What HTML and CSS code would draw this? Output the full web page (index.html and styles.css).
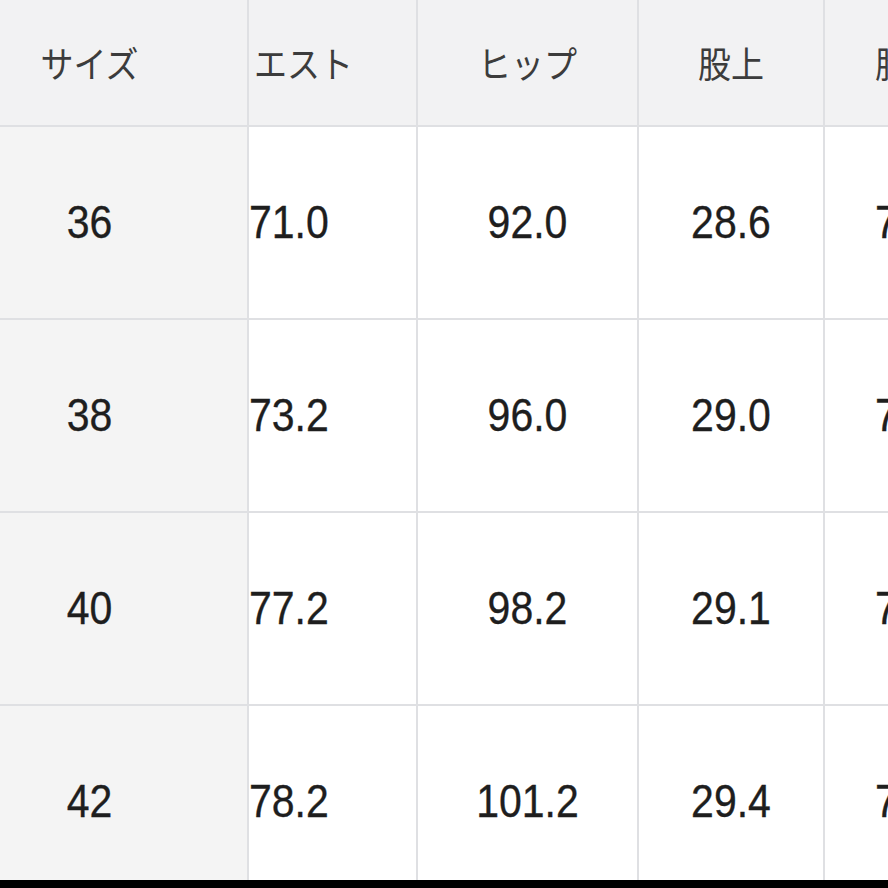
FILE: index.html
```html
<!DOCTYPE html>
<html lang="ja">
<head>
<meta charset="utf-8">
<title>サイズ表</title>
<link rel="stylesheet" href="styles.css">
</head>
<body>
<div class="sheet">
  <div class="viewport">
    <div class="grid">
      <div class="cell head c1"><span class="t">サイズ</span></div>
      <div class="cell head c2"><span class="t">エスト</span></div>
      <div class="cell head c3"><span class="t">ヒップ</span></div>
      <div class="cell head c4"><span class="t">股上</span></div>
      <div class="cell head c5"><span class="t">股下</span></div>

      <div class="cell side c1"><span class="n">36</span></div>
      <div class="cell c2"><span class="n">71.0</span></div>
      <div class="cell c3"><span class="n">92.0</span></div>
      <div class="cell c4"><span class="n">28.6</span></div>
      <div class="cell c5"><span class="n">76.0</span></div>

      <div class="cell side c1"><span class="n">38</span></div>
      <div class="cell c2"><span class="n">73.2</span></div>
      <div class="cell c3"><span class="n">96.0</span></div>
      <div class="cell c4"><span class="n">29.0</span></div>
      <div class="cell c5"><span class="n">76.0</span></div>

      <div class="cell side c1"><span class="n">40</span></div>
      <div class="cell c2"><span class="n">77.2</span></div>
      <div class="cell c3"><span class="n">98.2</span></div>
      <div class="cell c4"><span class="n">29.1</span></div>
      <div class="cell c5"><span class="n">76.0</span></div>

      <div class="cell side c1"><span class="n">42</span></div>
      <div class="cell c2"><span class="n">78.2</span></div>
      <div class="cell c3"><span class="n">101.2</span></div>
      <div class="cell c4"><span class="n">29.4</span></div>
      <div class="cell c5"><span class="n">76.0</span></div>
    </div>
  </div>
  <div class="bottom-bar"></div>
</div>
</body>
</html>
```

FILE: styles.css
```css
html, body {
  margin: 0;
  padding: 0;
  background: #ffffff;
  overflow: hidden;
}

.sheet {
  width: 888px;
  height: 888px;
  display: flex;
  flex-direction: column;
  overflow: hidden;
}

.viewport {
  height: 880px;
  flex: none;
  overflow: hidden;
}

.grid {
  display: grid;
  grid-template-columns: 247px 167px 219px 184px 1fr;
  grid-template-rows: 125px 191px 191px 191px 191px;
  gap: 2px;
  background: #dfe0e3;
  width: 960px;
}

.cell {
  background: #ffffff;
  display: flex;
  align-items: center;
  overflow: hidden;
  white-space: nowrap;
}

.head {
  background: #f2f2f3;
}

.side {
  background: #f4f4f4;
}

.c1 {
  justify-content: center;
  padding-right: 68px;
}

.c2 {
  justify-content: flex-start;
  padding-left: 0;
}

.c2.head {
  padding-left: 5px;
}

.c3, .c4 {
  justify-content: center;
}

.c5 {
  justify-content: flex-start;
  padding-left: 50px;
}

.t {
  display: inline-block;
  font-family: "Noto Sans CJK JP", "Noto Sans", sans-serif;
  font-weight: 400;
  font-size: 33px;
  color: #3c3c3c;
  transform: scaleY(1.1);
}

.n {
  display: inline-block;
  font-family: "Liberation Sans", Arial, sans-serif;
  font-size: 41px;
  color: #1e1e1e;
  transform: scaleY(1.12);
  -webkit-text-stroke: 0.3px #1e1e1e;
}

.bottom-bar {
  height: 8px;
  background: #000000;
  flex: none;
}
```
